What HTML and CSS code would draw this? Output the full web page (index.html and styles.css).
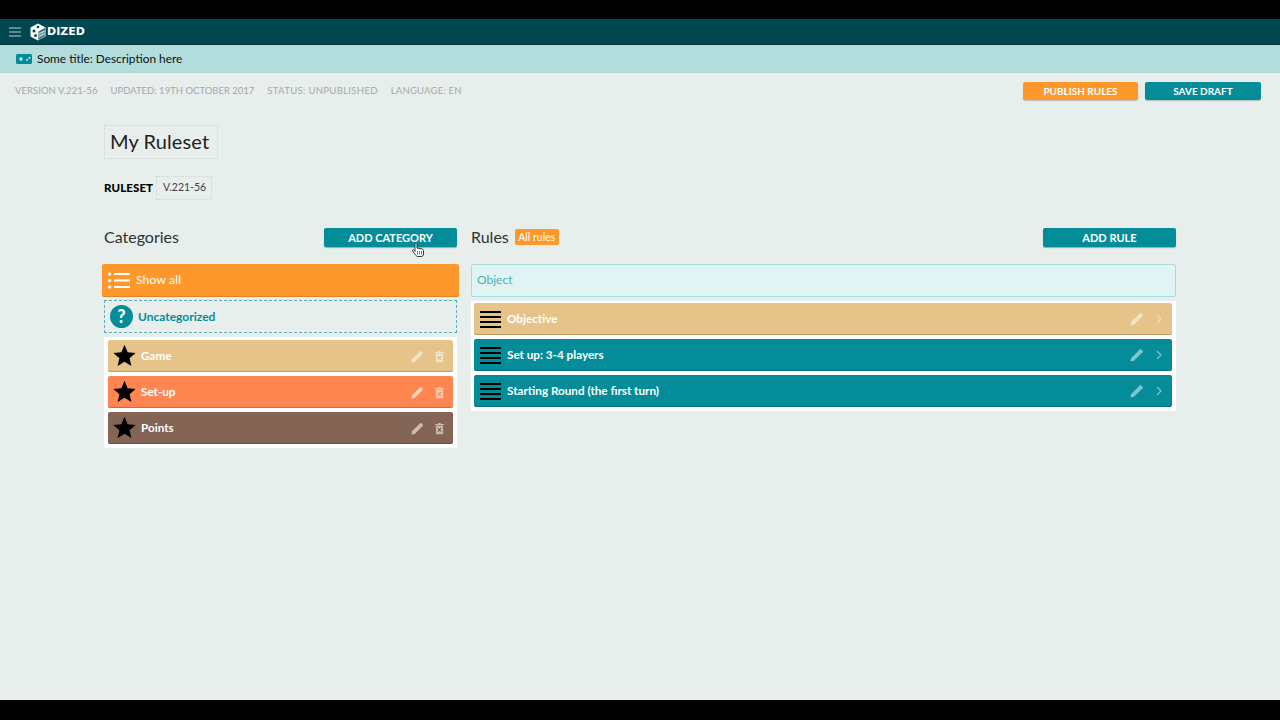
FILE: index.html
```html
<!DOCTYPE html>
<html lang="en">
<head>
<meta charset="utf-8">
<title>Dized</title>
<link rel="stylesheet" href="styles.css">
</head>
<body>
<div class="screen">
  <div class="letterbox-top"></div>
  <header class="topbar">
    <svg class="burger" viewBox="0 0 12 10" width="12" height="10"><path d="M0 1h12M0 5h12M0 9h12" stroke="#b5d3d3" stroke-width="1"/></svg>
    <svg class="logo-die" viewBox="0 0 18 18" width="18" height="18">
      <path d="M9 0.5 16.5 4.5V13.500L9 17.500 1.500 13.500V4.500Z" fill="#fff"/>
      <path d="M9.5 8.500 16 5V13.200L9.500 17Z" fill="#01474f"/>
      <path d="M11 8.500v7M13 7.500v7M15 6.500v7M9.800 11l6-3M9.800 13.500l6-3" stroke="#fff" stroke-width="0.8"/>
      <circle cx="5" cy="8" r="1.500" fill="#01474f"/><circle cx="6.500" cy="12.500" r="1.500" fill="#01474f"/><circle cx="9" cy="4" r="1.300" fill="#01474f"/>
    </svg>
    <span class="logo-text">DIZED</span>
  </header>
  <div class="subbar">
    <svg class="pad" viewBox="0 0 16 10" width="16" height="10"><rect width="16" height="10" rx="1.500" fill="#048d99"/><path d="M3 5h4M5 3v4" stroke="#dff" stroke-width="1.200"/><circle cx="11" cy="6" r="0.900" fill="#dff"/><circle cx="13.500" cy="4" r="0.900" fill="#dff"/></svg>
    <span class="subbar-text">Some title: Description here</span>
  </div>
  <main class="main">
    <div class="toolbar">
      <div class="meta">
        <span class="meta-version">VERSION V.221-56</span>
        <span>UPDATED: 19TH OCTOBER 2017</span>
        <span class="meta-status">STATUS: UNPUBLISHED</span>
        <span class="meta-lang">LANGUAGE: EN</span>
      </div>
      <div class="actions">
        <button class="btn btn-orange btn-small">PUBLISH RULES</button>
        <button class="btn btn-teal btn-small">SAVE DRAFT</button>
      </div>
    </div>
    <div class="content">
      <h1 class="title">My Ruleset</h1>
      <div class="ruleset">
        <strong>RULESET</strong>
        <span class="version">V.221-56</span>
      </div>
      <div class="columns">
        <section class="col-left">
          <div class="col-head">
            <h2>Categories</h2>
            <button class="btn btn-teal btn-large">ADD CATEGORY</button>
          </div>
          <div class="show-all">
            <svg viewBox="0 0 22 17" width="22" height="17"><path d="M6 2h16M6 8.500h16M6 15h16" stroke="#fff" stroke-width="2"/><circle cx="1.700" cy="2" r="1.600" fill="#fff"/><circle cx="1.700" cy="8.500" r="1.600" fill="#fff"/><circle cx="1.700" cy="15" r="1.600" fill="#fff"/></svg>
            <span class="lift">Show all</span>
          </div>
          <div class="uncat">
            <span class="q">?</span>
            <span class="lift">Uncategorized</span>
          </div>
          <div class="list cat-list">
            <div class="row row-sand">
              <svg class="star" viewBox="0 0 24 24" width="23" height="23"><path d="M12 .8 15.300 8.600 23.600 9.300 17.300 14.800 19.200 23 12 18.600 4.800 23 6.700 14.800.4 9.300 8.700 8.600Z" fill="#000"/></svg>
              <span class="row-label">Game</span>
              <svg class="ico" viewBox="0 0 14 14" width="13" height="13"><path d="M0.500 13.500 1.200 10 9.800 1.400a1 1 0 0 1 1.400 0l1.400 1.400a1 1 0 0 1 0 1.400L4 12.800Z" fill="#f3e3c8"/></svg>
              <svg class="ico trash" viewBox="0 0 10 13" width="9" height="13"><path d="M0 1.500h10v1.200H0ZM3.500.3h3v1.200h-3ZM1 3.200h8V13H1Z" fill="#f3e3c8"/><path d="M3.300 6l3.400 4M6.700 6l-3.400 4" stroke="#c9a878" stroke-width="1"/></svg>
            </div>
            <div class="row row-coral">
              <svg class="star" viewBox="0 0 24 24" width="23" height="23"><path d="M12 .8 15.300 8.600 23.600 9.300 17.300 14.800 19.200 23 12 18.600 4.800 23 6.700 14.800.4 9.300 8.700 8.600Z" fill="#000"/></svg>
              <span class="row-label">Set-up</span>
              <svg class="ico" viewBox="0 0 14 14" width="13" height="13"><path d="M0.500 13.500 1.200 10 9.800 1.400a1 1 0 0 1 1.400 0l1.400 1.400a1 1 0 0 1 0 1.400L4 12.800Z" fill="#fbd5bd"/></svg>
              <svg class="ico trash" viewBox="0 0 10 13" width="9" height="13"><path d="M0 1.500h10v1.200H0ZM3.500.3h3v1.200h-3ZM1 3.200h8V13H1Z" fill="#fbc5a6"/><path d="M3.300 6l3.400 4M6.700 6l-3.400 4" stroke="#d8764a" stroke-width="1"/></svg>
            </div>
            <div class="row row-brown">
              <svg class="star" viewBox="0 0 24 24" width="23" height="23"><path d="M12 .8 15.300 8.600 23.600 9.300 17.300 14.800 19.200 23 12 18.600 4.800 23 6.700 14.800.4 9.300 8.700 8.600Z" fill="#000"/></svg>
              <span class="row-label">Points</span>
              <svg class="ico" viewBox="0 0 14 14" width="13" height="13"><path d="M0.500 13.500 1.200 10 9.800 1.400a1 1 0 0 1 1.400 0l1.400 1.400a1 1 0 0 1 0 1.400L4 12.800Z" fill="#cdbcb0"/></svg>
              <svg class="ico trash" viewBox="0 0 10 13" width="9" height="13"><path d="M0 1.500h10v1.200H0ZM3.500.3h3v1.200h-3ZM1 3.200h8V13H1Z" fill="#c9b6a9"/><path d="M3.300 6l3.400 4M6.700 6l-3.400 4" stroke="#4d3a30" stroke-width="1"/></svg>
            </div>
          </div>
        </section>
        <section class="col-right">
          <div class="col-head">
            <div class="rules-title">
              <h2>Rules</h2>
              <span class="tag">All rules</span>
            </div>
            <button class="btn btn-teal btn-large">ADD RULE</button>
          </div>
          <div class="search">Object</div>
          <div class="list rule-list">
            <div class="row row-sand">
              <svg class="lines" viewBox="0 0 21 17" width="21" height="17"><path d="M0 1h21M0 6h21M0 11h21M0 16h21" stroke="#000" stroke-width="2"/></svg>
              <span class="row-label">Objective</span>
              <svg class="ico" viewBox="0 0 14 14" width="14" height="14"><path d="M0.500 13.500 1.200 10 9.800 1.400a1 1 0 0 1 1.400 0l1.400 1.400a1 1 0 0 1 0 1.400L4 12.800Z" fill="#f3e3c8"/></svg>
              <svg class="ico chev" viewBox="0 0 6 10" width="6" height="10"><path d="M1 1l4 4-4 4" fill="none" stroke="#f0dcbc" stroke-width="1.200"/></svg>
            </div>
            <div class="row row-teal">
              <svg class="lines" viewBox="0 0 21 17" width="21" height="17"><path d="M0 1h21M0 6h21M0 11h21M0 16h21" stroke="#000" stroke-width="2"/></svg>
              <span class="row-label">Set up: 3-4 players</span>
              <svg class="ico" viewBox="0 0 14 14" width="14" height="14"><path d="M0.500 13.500 1.200 10 9.800 1.400a1 1 0 0 1 1.400 0l1.400 1.400a1 1 0 0 1 0 1.400L4 12.800Z" fill="#7fc6cc"/></svg>
              <svg class="ico chev" viewBox="0 0 6 10" width="6" height="10"><path d="M1 1l4 4-4 4" fill="none" stroke="#7fc6cc" stroke-width="1.200"/></svg>
            </div>
            <div class="row row-teal">
              <svg class="lines" viewBox="0 0 21 17" width="21" height="17"><path d="M0 1h21M0 6h21M0 11h21M0 16h21" stroke="#000" stroke-width="2"/></svg>
              <span class="row-label">Starting Round (the first turn)</span>
              <svg class="ico" viewBox="0 0 14 14" width="14" height="14"><path d="M0.500 13.500 1.200 10 9.800 1.400a1 1 0 0 1 1.400 0l1.400 1.400a1 1 0 0 1 0 1.400L4 12.800Z" fill="#7fc6cc"/></svg>
              <svg class="ico chev" viewBox="0 0 6 10" width="6" height="10"><path d="M1 1l4 4-4 4" fill="none" stroke="#7fc6cc" stroke-width="1.200"/></svg>
            </div>
          </div>
        </section>
      </div>
    </div>
    <svg class="cursor" viewBox="0 0 12 14" width="12" height="14"><path d="M3 .8a1 1 0 0 1 2 0V5l5 1c1 .2 1.500.8 1.500 1.600V11c0 1.500-1 2.500-2.500 2.500H6c-1 0-1.600-.4-2.200-1.200L.6 8.200c-.6-.9.6-1.800 1.300-1L3 8.400Z" fill="#fff" stroke="#222" stroke-width="0.900"/><path d="M5.500 8v3.500M7.500 8v3.500M9.500 8v3.500" stroke="#222" stroke-width="0.600"/></svg>
  </main>
  <div class="letterbox-bottom"></div>
</div>
</body>
</html>
```
FILE: styles.css
```css
* { box-sizing: border-box; }
html, body { margin: 0; padding: 0; }
body { font-family: Lato, "Open Sans", "Liberation Sans", sans-serif; background: #000; }
.screen { width: 1280px; height: 720px; display: flex; flex-direction: column; overflow: hidden; }
.letterbox-top { height: 19px; background: #000; }
.letterbox-bottom { height: 20px; background: #000; }
.topbar { height: 26px; background: #01474f; display: flex; align-items: center; padding-left: 9px; border-bottom: 1px solid #02353b; }
.logo-die { margin-left: 8px; }
.logo-text { color: #fff; font: 700 11px "DejaVu Sans", sans-serif; }
.subbar { height: 28px; background: #b3dcdc; display: flex; align-items: center; padding-left: 16px; gap: 5px; font-size: 11.850px; color: #0a1414; }
.subbar-text { padding-bottom: 2px; }
.main { position: relative; flex: 1; background: #e8eeec; display: flex; flex-direction: column; }
.toolbar { display: flex; justify-content: space-between; align-items: center; padding: 9px 19px 0 15px; }
.meta { display: flex; gap: 13px; font-size: 9.500px; color: #a3a8a8; padding-bottom: 1px; }
.meta-version { letter-spacing: 0.05px; }
.meta-status { letter-spacing: 0.33px; }
.meta-lang { letter-spacing: 0.2px; }
.actions { display: flex; gap: 7px; }
.btn { border: 0; border-radius: 2px; color: #fff; font: 700 10px Lato, sans-serif; padding: 0; }
.btn-small { height: 18px; box-shadow: 0 1px 1px rgba(0,0,0,.2); }
.btn-orange { background: #ff982b; width: 115px; }
.btn-small.btn-teal { width: 116px; }
.btn-teal { background: #048d99; }
.btn-large { height: 19px; width: 133px; font-size: 11px; box-shadow: 0 1px 1px rgba(0,0,0,.3); }
.content { padding: 25px 104px 0; display: flex; flex-direction: column; }
.title { align-self: flex-start; margin: 0; width: 114px; height: 34px; border: 1px dotted #c5dbd8; font-weight: 400; font-size: 20px; line-height: 30px; padding-left: 5px; letter-spacing: 0.1px; color: #222; white-space: nowrap; }
.ruleset { display: flex; align-items: center; margin-top: 17px; gap: 3px; height: 24px; }
.ruleset strong { font-size: 11.500px; font-weight: 900; color: #000; width: 49px; letter-spacing: 0.1px; padding-bottom: 2px; }
.version { height: 24px; width: 56px; border: 1px dotted #c5dbd8; font-size: 10.500px; line-height: 20px; padding-left: 6px; color: #3a4444; }
.columns { display: flex; gap: 14px; margin-top: 28px; }
.col-left { width: 353px; flex: none; }
.col-right { width: 705px; flex: none; }
.col-head { display: flex; justify-content: space-between; align-items: center; height: 19px; margin-bottom: 17px; }
.col-head h2 { margin: 0 0 2px; font-weight: 400; font-size: 16px; color: #2b3434; }
.rules-title { display: flex; align-items: center; gap: 6px; }
.tag { background: #ff982b; color: #fff; font-size: 10.500px; padding: 2px 3px; width: 44px; text-align: center; border-radius: 2px; height: 16px; line-height: 12px; margin-bottom: 2px; }
.lift { padding-bottom: 1px; }
.show-all { margin: 0 -2px; height: 33px; background: #ff982b; border-radius: 2px; border-bottom: 1px solid #e0842a; display: flex; align-items: center; gap: 6px; padding-left: 6px; color: #fff; font-size: 12px; letter-spacing: 0.2px; }
.uncat { margin-top: 3px; height: 33px; border: 1px dashed #5aaeb6; display: flex; align-items: center; gap: 5px; padding-left: 5px; color: #048d99; font-size: 12px; font-weight: 700; }
.q { width: 23px; height: 23px; border-radius: 50%; background: #048d99; color: #fff; font-size: 18px; font-weight: 900; text-align: center; line-height: 23px; }
.search { height: 33px; background: #e0f5f3; border: 1px solid #a8dcdc; border-radius: 2px; padding-left: 5px; color: #4ab0b8; font-size: 12px; line-height: 30px; }
.list { background: #fff; display: flex; flex-direction: column; gap: 4px; }
.cat-list { margin-top: 4px; padding: 3px 4px 4px; }
.rule-list { margin-top: 4px; padding: 2px 4px 4px 3px; }
.row { height: 32px; border-radius: 2px; display: flex; align-items: center; padding-left: 5px; color: #fff; font-size: 11.700px; font-weight: 700; box-shadow: inset 0 -1px 0 rgba(0,0,0,.2); }
.row-sand { background: #e6c388; }
.row-coral { background: #ff8650; }
.row-brown { background: #836455; }
.row-teal { background: #048d99; }
.row-label { margin-left: 5px; flex: 1; padding-bottom: 2px; }
.lines { margin: 0 1px 0 1px; }
.star { margin-bottom: 1px; }
.ico { flex: none; }
.trash { margin: 0 9px 0 11px; }
.chev { margin: 0 10px 0 12px; }
.cursor { position: absolute; left: 412px; top: 170px; }
```
